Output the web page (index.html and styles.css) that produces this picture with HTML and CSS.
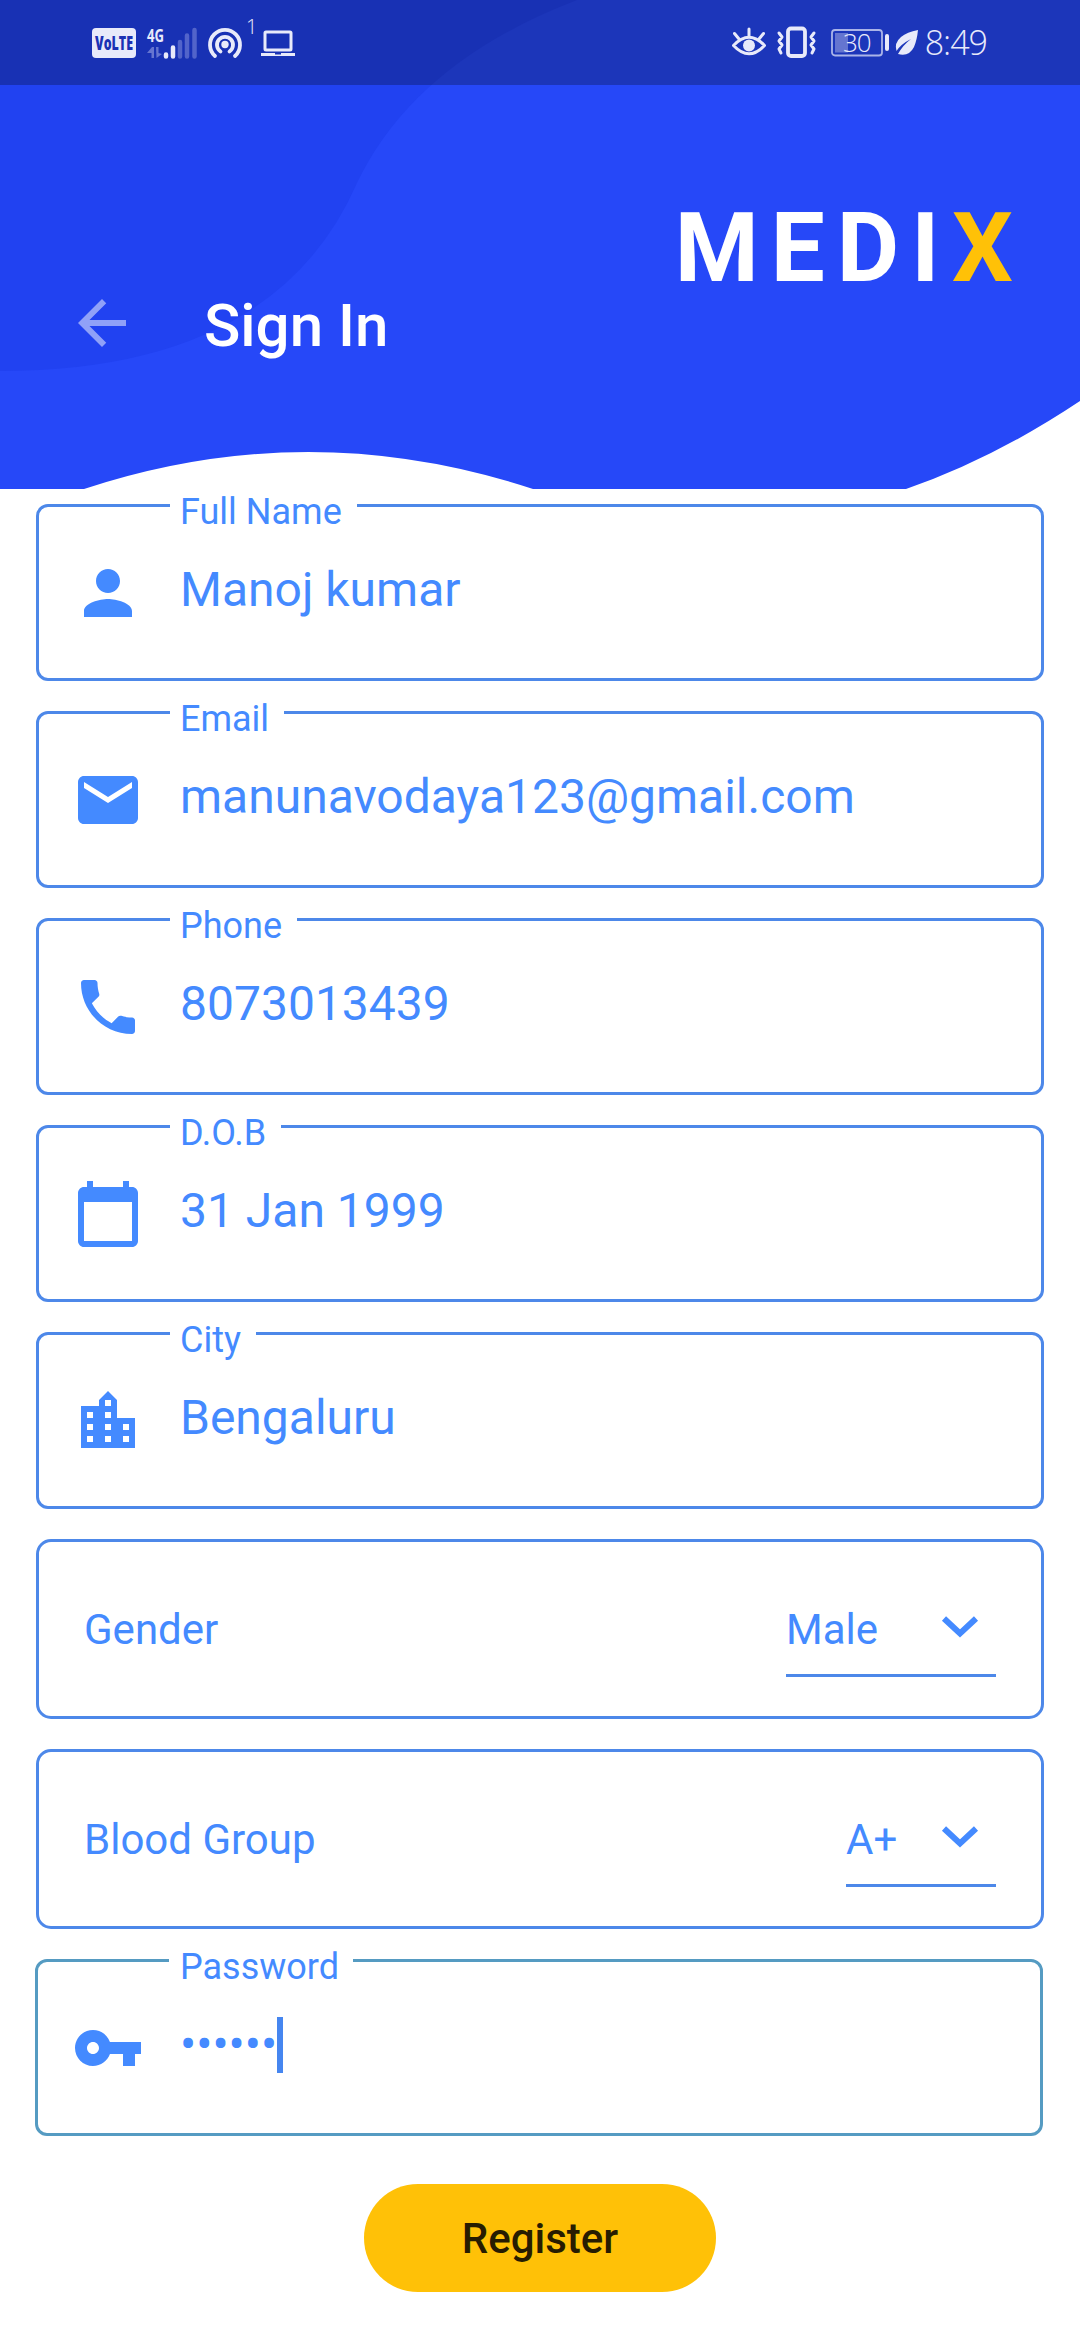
FILE: index.html
```
<!DOCTYPE html>
<html lang="en">
<head>
<meta charset="utf-8">
<title>Medix</title>
<link rel="stylesheet" href="styles.css">
</head>
<body>
<header class="header">
  <svg class="header-bg" viewBox="0 0 1080 489" aria-hidden="true">
    <path class="bg-base" d="M0 0H1080V401Q993 459 906 489H533Q308 415 84 489H0Z"/>
    <path class="bg-shade" d="M0 0H577Q415 62 357 183Q275 371 0 371Z"/>
  </svg>
  <div class="status-bar">
    <div class="status-left">
      <svg class="volte" width="44" height="30" viewBox="0 0 44 30">
        <rect class="solid" width="44" height="30" rx="4"/><text class="volte-text" x="3" y="22" textLength="38" lengthAdjust="spacingAndGlyphs">VoLTE</text>
      </svg>
      <svg class="signal" width="52" height="34" viewBox="0 0 52 34">
        <text x="0" y="15.500" class="net" textLength="17" lengthAdjust="spacingAndGlyphs">4G</text>
        <path class="dim" d="M0 27L5 21H7V32H4.500V27ZM9 21H11.500V27L15 28L9.500 32Z"/>
        <g class="bars"><path d="M19 28.500V30.500M26 21.500V30.500"/><path class="dim-stroke" d="M33 16V30.500M40 9.500V30.500M47.500 4V30.500"/></g>
      </svg>
      <svg class="hotspot" width="36" height="34" viewBox="0 0 36 34">
        <circle cx="18" cy="18.500" r="3.700" class="solid"/>
        <path class="line4" d="M13.500 25.500A8 8 0 1 1 22.500 25.500M8 30A15 15 0 1 1 28 30"/>
      </svg>
      <span class="count">1</span>
      <svg class="laptop" width="36" height="30" viewBox="0 0 36 30">
        <rect x="5" y="3" width="26" height="18" rx="1" class="line3"/><path class="solid" d="M1 24H15V25.500H21V24H35V27H1Z"/>
      </svg>
    </div>
    <div class="status-right">
      <svg width="36" height="34" viewBox="0 0 36 34">
        <path class="line3" d="M2.500 19.500Q18 3 33.500 19.500Q18 36 2.500 19.500ZM18 3V10M3.500 7.500L8 13M32.500 7.500L28 13"/><circle class="solid" cx="18" cy="19.500" r="6"/>
      </svg>
      <svg class="vibrate" width="40" height="34" viewBox="0 0 40 34">
        <rect class="line4" x="12" y="2.500" width="17" height="27.500" rx="3"/>
        <path class="line3" d="M3 7L6 11L3 15L6 19L3 23L5 27M38 7L35 11L38 15L35 19L38 23L36 27"/>
      </svg>
      <svg class="battery" width="60" height="34" viewBox="0 0 60 34">
        <rect class="frame" x="1" y="4" width="50" height="25.500" rx="3"/><rect class="dim" x="4" y="7" width="13" height="19.500"/>
        <rect class="solid" x="54" y="8" width="4" height="17" rx="2"/><text class="level" x="12" y="25.500">30</text>
      </svg>
      <svg class="leaf" width="24" height="28" viewBox="0 0 24 28">
        <path class="solid" d="M23 1Q12 3 6 8Q-1 14 1.500 22Q6 15 16 10Q8 16 3 25Q14 28 19 18Q22 11 23 1Z"/>
      </svg>
      <span class="clock">8:49</span>
    </div>
  </div>
  <div class="brand">MEDI<span class="brand-x">X</span></div>
  <div class="title-row">
    <svg class="icon back" viewBox="0 0 24 24"><path d="M20 11H7.830l5.590-5.590L12 4l-8 8 8 8 1.410-1.410L7.830 13H20v-2z"/></svg>
    <h1 class="title">Sign In</h1>
  </div>
</header>
<main class="form">
  <div class="field"><span class="label">Full Name</span>
    <svg class="icon" viewBox="0 0 24 24"><path d="M12 12c2.210 0 4-1.790 4-4s-1.790-4-4-4-4 1.790-4 4 1.790 4 4 4zm0 2c-2.670 0-8 1.340-8 4v2h16v-2c0-2.660-5.330-4-8-4z"/></svg>
    <span class="value">Manoj kumar</span></div>
  <div class="field"><span class="label">Email</span>
    <svg class="icon" viewBox="0 0 24 24"><path d="M20 4H4c-1.100 0-1.990.9-1.990 2L2 18c0 1.100.9 2 2 2h16c1.100 0 2-.9 2-2V6c0-1.100-.9-2-2-2zm0 4l-8 5-8-5V6l8 5 8-5v2z"/></svg>
    <span class="value">manunavodaya123@gmail.com</span></div>
  <div class="field"><span class="label">Phone</span>
    <svg class="icon" viewBox="0 0 24 24"><path d="M6.620 10.790c1.440 2.830 3.760 5.140 6.590 6.590l2.200-2.200c.27-.27.67-.36 1.020-.24 1.120.37 2.330.57 3.570.57.55 0 1 .45 1 1V20c0 .55-.45 1-1 1-9.390 0-17-7.610-17-17 0-.55.45-1 1-1h3.500c.55 0 1 .45 1 1 0 1.250.2 2.450.57 3.570.11.35.03.74-.25 1.020l-2.200 2.200z"/></svg>
    <span class="value">8073013439</span></div>
  <div class="field"><span class="label">D.O.B</span>
    <svg class="icon" viewBox="0 0 24 24"><path d="M20 3h-1V1h-2v2H7V1H5v2H4c-1.100 0-2 .9-2 2v16c0 1.100.9 2 2 2h16c1.100 0 2-.9 2-2V5c0-1.100-.9-2-2-2zm0 18H4V8h16v13z"/></svg>
    <span class="value">31 Jan 1999</span></div>
  <div class="field"><span class="label">City</span>
    <svg class="icon" viewBox="0 0 24 24"><path d="M15 11V5l-3-3-3 3v2H3v14h18V11h-6zm-8 8H5v-2h2v2zm0-4H5v-2h2v2zm0-4H5V9h2v2zm6 8h-2v-2h2v2zm0-4h-2v-2h2v2zm0-4h-2V9h2v2zm0-4h-2V5h2v2zm6 12h-2v-2h2v2zm0-4h-2v-2h2v2z"/></svg>
    <span class="value">Bengaluru</span></div>
  <div class="picker"><span>Gender</span>
    <div class="select select-gender"><span>Male</span><svg class="chevron" viewBox="0 0 36 22"><path d="M2 2.500L18 17.500L34 2.500"/></svg></div></div>
  <div class="picker"><span>Blood Group</span>
    <div class="select select-blood"><span>A+</span><svg class="chevron" viewBox="0 0 36 22"><path d="M2 2.500L18 17.500L34 2.500"/></svg></div></div>
  <div class="field field-focused"><span class="label">Password</span>
    <svg class="icon" viewBox="0 0 24 24"><path d="M12.650 10C11.830 7.670 9.610 6 7 6c-3.310 0-6 2.690-6 6s2.690 6 6 6c2.610 0 4.830-1.670 5.650-4H17v4h4v-4h2v-4H12.650zM7 14c-1.100 0-2-.9-2-2s.9-2 2-2 2 .9 2 2-.9 2-2 2z"/></svg>
    <span class="value">••••••</span><span class="cursor"></span></div>
  <button class="register">Register</button>
</main>
</body>
</html>
```
FILE: styles.css
```
* { box-sizing: border-box; }
body { margin: 0; width: 1080px; height: 2340px; overflow: hidden; background: #fff; font-family: Roboto, sans-serif; color: #448aff; }
svg { display: block; flex: none; overflow: visible; }

.header { position: relative; height: 489px; color: #fff; }
.header-bg { position: absolute; inset: 0; width: 1080px; height: 489px; z-index: -1; }
.bg-base { fill: #2648f8; }
.bg-shade { fill: #2142f1; }

.status-bar { height: 85px; padding: 0 93px 0 92px; display: flex; justify-content: space-between; background: rgba(0, 0, 0, .25); color: #e8eafa; }
.status-left, .status-right { display: flex; align-items: flex-start; padding-top: 26px; }
.volte { margin-top: 2px; }
.volte-text { font: 800 20px "Open Sans", sans-serif; fill: #1b31b4; }
.signal { margin-left: 11px; }
.net { font: 700 18px "Noto Sans", sans-serif; fill: #e8eafa; }
.bars { fill: none; stroke: #e8eafa; stroke-width: 4.5; stroke-linecap: round; }
.dim { fill: #6575d0; }
.dim-stroke { stroke: #5264ca; }
.hotspot { margin-left: 8px; }
.count { width: 14px; margin: -13px 0 0 3px; font: 300 20px/28px "Open Sans", sans-serif; }
.laptop { margin: 3px 0 0 0; }
.solid { fill: #e8eafa; }
.line3, .line4, .frame { fill: none; stroke: #e8eafa; stroke-width: 3; stroke-linecap: round; stroke-linejoin: round; }
.line4 { stroke-width: 3.8; }
.frame { stroke: #aab4e8; stroke-width: 1.8; }
.vibrate { margin-left: 9px; }
.battery { margin-left: 15px; }
.level { font: 300 26px "Open Sans", sans-serif; fill: #e8eafa; letter-spacing: -1px; }
.leaf { margin: 3px 0 0 4px; }
.clock { margin: -8px 0 0 6px; font: 300 34px/48px "Open Sans", sans-serif; letter-spacing: -1px; white-space: nowrap; }

.brand { padding: 107px 55px 0 0; text-align: right; font-size: 96px; line-height: 112px; font-weight: 700; letter-spacing: 12px; }
.brand-x { color: #ffc107; }
.title-row { display: flex; align-items: flex-start; margin-top: -17px; padding-left: 66px; }
.icon { width: 72px; height: 72px; fill: currentColor; }
.back { opacity: .5; }
.title { margin: 4px 0 0 66px; font-size: 60px; line-height: 70px; font-weight: 500; }

.form { padding: 15px 36px 0; display: flex; flex-direction: column; gap: 30px; }
.field { position: relative; display: flex; align-items: flex-start; height: 177px; padding: 50px 33px 0; border: 3px solid #4d88e9; border-radius: 12px; }
.label { position: absolute; left: 131px; top: -16px; padding: 0 15px 0 10px; background: #fff; font-size: 36px; line-height: 42px; white-space: nowrap; }
.value { margin: 5px 0 0 36px; font-size: 48px; line-height: 56px; }
.picker { display: flex; justify-content: space-between; height: 180px; padding: 0 45px; border: 3px solid #4d88e9; border-radius: 15px; font-size: 42px; line-height: 175px; }
.select { display: flex; justify-content: space-between; height: 97px; margin-top: 38px; padding-right: 18px; border-bottom: 3px solid #4d88e9; line-height: 99px; }
.select-gender { width: 210px; }
.select-blood { width: 150px; }
.chevron { width: 36px; height: 22px; margin-top: 36px; fill: none; stroke: #448aff; stroke-width: 6; }
.field-focused { margin: 0 1px 0 -1px; padding-left: 34px; border-color: #559bc2; }
.field-focused .label { padding: 0 14px 0 11px; }
.cursor { width: 6px; height: 56px; margin: 5px 0 0 0; background: #4686f0; }
.register { align-self: center; width: 352px; height: 108px; margin-top: 18px; padding: 0; border: 0; border-radius: 54px; background: #ffc107; color: #271c01; font: 500 42px/109px Roboto, sans-serif; }
```
